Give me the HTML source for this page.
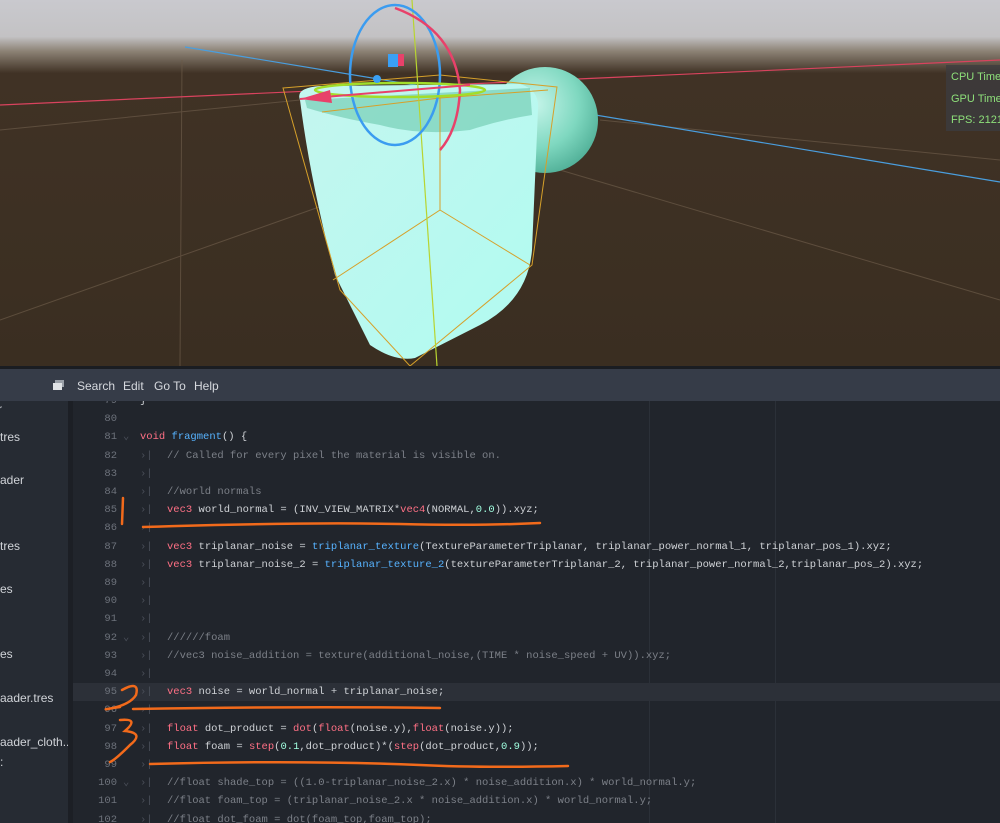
<!DOCTYPE html>
<html><head><meta charset="utf-8"><style>
*{margin:0;padding:0;box-sizing:border-box}
body{width:1000px;height:823px;overflow:hidden;background:#21252c;position:relative;font-family:"Liberation Sans",sans-serif}
#vp{position:absolute;left:0;top:0;width:1000px;height:366px}
#sep{position:absolute;left:0;top:366px;width:1000px;height:3px;background:#1a1d22}
#menu{position:absolute;left:0;top:369px;width:1000px;height:32px;background:#363c48;color:#d6d9de;font-size:12px}
#menu span{position:absolute;top:10px}
#side{position:absolute;left:0;top:401px;width:68px;height:422px;background:#262b33;color:#d0d3d8;font-size:12px;overflow:hidden}
#side div{position:absolute;white-space:nowrap}
#gap{position:absolute;left:68px;top:401px;width:5px;height:422px;background:#1c1f25}
#code{position:absolute;left:73px;top:401px;width:927px;height:422px;background:#21252c;overflow:hidden}
.hl{position:absolute;left:0;width:927px;height:18px;background:#2c3038}
pre{position:absolute;left:0;top:-9px;font-family:"Liberation Mono",monospace;font-size:10.5px;line-height:18.2px;color:#cfd2d6;white-space:pre}
.n{color:#6d727b;display:inline-block;width:44px;text-align:right}
.m{display:inline-block;width:23px;color:#4b505a;text-indent:6px}
.t{display:inline-block;width:27px;color:#4b505a}
.g{color:#4b505a}
.k{color:#ff7085}.f{color:#57b3ff}.c{color:#7c8088}.d{color:#a1ffe0}
.gl{position:absolute;top:0;width:1px;height:422px;background:#2b3038}
#perf{position:absolute;left:946px;top:65px;width:54px;height:66px;background:rgba(60,60,64,.75);color:#8ee07a;font-size:11px;overflow:hidden}
#perf div{position:absolute;left:5px;white-space:nowrap}
</style></head><body>
<svg id="vp" width="1000" height="366" viewBox="0 0 1000 366">
<defs>
<linearGradient id="sky" x1="0" y1="0" x2="0" y2="1">
<stop offset="0" stop-color="#c9c9ce"/><stop offset="0.1" stop-color="#c3c2c4"/><stop offset="0.14" stop-color="#8c8275"/><stop offset="0.2" stop-color="#403225"/><stop offset="1" stop-color="#3a2e21"/></linearGradient>
<linearGradient id="cube" x1="0" y1="0" x2="1" y2="1"><stop offset="0" stop-color="#c4f6ef"/><stop offset="1" stop-color="#b0fbf0"/></linearGradient>
<radialGradient id="sph" cx="0.4" cy="0.35" r="0.7"><stop offset="0" stop-color="#c6f5ea"/><stop offset="0.6" stop-color="#7fd8c0"/><stop offset="1" stop-color="#4fae96"/></radialGradient>
</defs>
<rect width="1000" height="366" fill="url(#sky)"/>
<g stroke="#6b5a48" stroke-width="1" opacity="0.7">
<line x1="0" y1="320" x2="480" y2="150"/><line x1="0" y1="130" x2="300" y2="100"/><line x1="560" y1="170" x2="1000" y2="300"/><line x1="600" y1="120" x2="1000" y2="160"/><line x1="180" y1="366" x2="182" y2="60"/>
</g>
<line x1="185" y1="47" x2="1000" y2="182" stroke="#4a9ede" stroke-width="1.2"/>
<line x1="0" y1="105" x2="1000" y2="60" stroke="#d9435e" stroke-width="1.2"/>
<circle cx="545" cy="120" r="53" fill="url(#sph)"/>
<path d="M300 100 Q295 88 320 86 L520 84 Q540 90 538 110 L532 250 Q528 300 480 325 L415 358 Q395 362 370 345 L335 275 Q310 180 300 100Z" fill="url(#cube)"/>
<path d="M305 100 L530 88 L532 115 Q500 120 470 130 Q420 136 380 125 Q340 118 307 108Z" fill="#7fd3bd" opacity="0.8"/>
<g fill="none" stroke="#d6a02a" stroke-width="1">
<path d="M283 88 L440 75 L557 87 L532 265 L410 366 L340 290 Z"/>
<path d="M322 112 L440 98 L440 210 L333 280"/><path d="M440 210 L530 265"/><path d="M440 98 L548 90"/>
</g>
<line x1="412" y1="0" x2="437" y2="366" stroke="#b8d430" stroke-width="1.2"/>
<ellipse cx="395" cy="75" rx="45" ry="70" fill="none" stroke="#3b9cf0" stroke-width="2.5"/>
<path d="M395 8 Q455 30 460 90 Q458 130 440 150" fill="none" stroke="#e8416a" stroke-width="2.5"/>
<ellipse cx="400" cy="90" rx="85" ry="7" fill="none" stroke="#a2dd2a" stroke-width="2.5"/>
<line x1="300" y1="99" x2="470" y2="85" stroke="#e8416a" stroke-width="2"/>
<path d="M300 99 L330 90 L332 103Z" fill="#e8416a"/>
<rect x="388" y="54" width="10" height="13" fill="#3aa0f5"/><rect x="398" y="54" width="6" height="12" fill="#e8416a"/>
<circle cx="377" cy="79" r="4" fill="#3aa0f5"/>
</svg>
<div id="perf"><div style="top:6px">CPU Time</div><div style="top:28px">GPU Time</div><div style="top:49px">FPS: 2121</div></div>
<div id="sep"></div>
<div id="menu">
<svg style="position:absolute;left:53px;top:10px" width="12" height="12"><rect x="2" y="1" width="9" height="7" fill="#9aa0a8"/><rect x="0" y="4" width="9" height="7" fill="#e0e3e6"/></svg>
<span style="left:77px">Search</span><span style="left:123px">Edit</span><span style="left:154px">Go To</span><span style="left:194px">Help</span></div>
<div id="side">
<div style="left:-2px;top:1px">r</div>
<div style="left:0;top:29px">tres</div>
<div style="left:0;top:72px">ader</div>
<div style="left:0;top:138px">tres</div>
<div style="left:0;top:181px">es</div>
<div style="left:0;top:246px">es</div>
<div style="left:0;top:290px">aader.tres</div>
<div style="left:0;top:334px">aader_cloth....</div>
<div style="left:0;top:354px">:</div>
</div>
<div id="gap"></div>
<div id="code">
<div class="gl" style="left:576px"></div><div class="gl" style="left:702px"></div>
<div class="hl" style="top:282px"></div>
<pre><span class="n">79</span><span class="m"></span>}
<span class="n">80</span><span class="m"></span>
<span class="n">81</span><span class="m">⌄</span><span class="k">void</span> <span class="f">fragment</span>() {
<span class="n">82</span><span class="m"></span><span class="t">›|</span><span class="c">// Called for every pixel the material is visible on.</span>
<span class="n">83</span><span class="m"></span><span class="t">›|</span>
<span class="n">84</span><span class="m"></span><span class="t">›|</span><span class="c">//world normals</span>
<span class="n">85</span><span class="m"></span><span class="t">›|</span><span class="k">vec3</span> world_normal = (INV_VIEW_MATRIX*<span class="k">vec4</span>(NORMAL,<span class="d">0.0</span>)).xyz;
<span class="n">86</span><span class="m"></span><span class="t">›|</span>
<span class="n">87</span><span class="m"></span><span class="t">›|</span><span class="k">vec3</span> triplanar_noise = <span class="f">triplanar_texture</span>(TextureParameterTriplanar, triplanar_power_normal_1, triplanar_pos_1).xyz;
<span class="n">88</span><span class="m"></span><span class="t">›|</span><span class="k">vec3</span> triplanar_noise_2 = <span class="f">triplanar_texture_2</span>(textureParameterTriplanar_2, triplanar_power_normal_2,triplanar_pos_2).xyz;
<span class="n">89</span><span class="m"></span><span class="t">›|</span>
<span class="n">90</span><span class="m"></span><span class="t">›|</span>
<span class="n">91</span><span class="m"></span><span class="t">›|</span>
<span class="n">92</span><span class="m">⌄</span><span class="t">›|</span><span class="c">//////foam</span>
<span class="n">93</span><span class="m"></span><span class="t">›|</span><span class="c">//vec3 noise_addition = texture(additional_noise,(TIME * noise_speed + UV)).xyz;</span>
<span class="n">94</span><span class="m"></span><span class="t">›|</span>
<span class="n">95</span><span class="m"></span><span class="t">›|</span><span class="k">vec3</span> noise = world_normal + triplanar_noise;
<span class="n">96</span><span class="m"></span><span class="t">›|</span>
<span class="n">97</span><span class="m"></span><span class="t">›|</span><span class="k">float</span> dot_product = <span class="k">dot</span>(<span class="k">float</span>(noise.y),<span class="k">float</span>(noise.y));
<span class="n">98</span><span class="m"></span><span class="t">›|</span><span class="k">float</span> foam = <span class="k">step</span>(<span class="d">0.1</span>,dot_product)*(<span class="k">step</span>(dot_product,<span class="d">0.9</span>));
<span class="n">99</span><span class="m"></span><span class="t">›|</span>
<span class="n">100</span><span class="m">⌄</span><span class="t">›|</span><span class="c">//float shade_top = ((1.0-triplanar_noise_2.x) * noise_addition.x) * world_normal.y;</span>
<span class="n">101</span><span class="m"></span><span class="t">›|</span><span class="c">//float foam_top = (triplanar_noise_2.x * noise_addition.x) * world_normal.y;</span>
<span class="n">102</span><span class="m"></span><span class="t">›|</span><span class="c">//float dot_foam = dot(foam_top,foam_top);</span>
</pre>
</div>
<svg style="position:absolute;left:0;top:0" width="1000" height="823" fill="none" stroke="#f26a1b" stroke-width="2.5" stroke-linecap="round">
<path d="M123 498 L122 524"/>
<path d="M143 527 Q300 522 400 524 Q480 526 540 523"/>
<path d="M122 690 Q140 680 136 695 Q130 705 108 709 Q100 710 120 707"/>
<path d="M133 709 Q300 706 440 708"/>
<path d="M120 720 Q140 718 125 731 Q145 733 130 745 Q115 760 110 762"/>
<path d="M150 764 Q300 760 420 765 Q480 768 568 766"/>
</svg>
</body></html>
